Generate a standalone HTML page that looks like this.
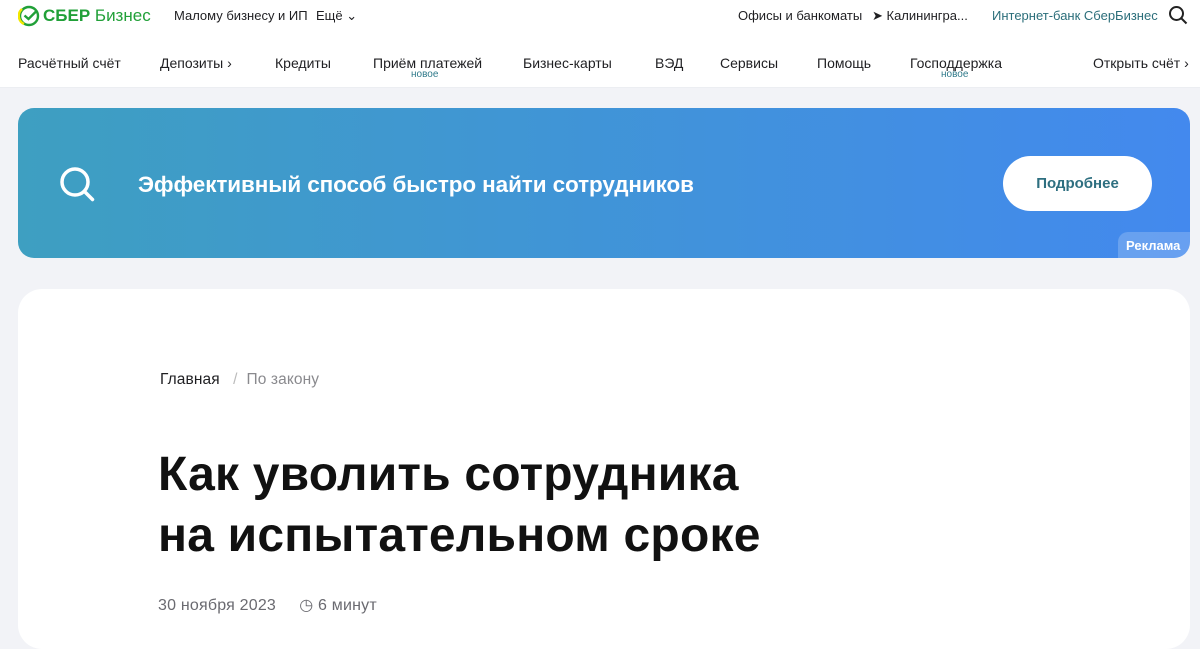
<!DOCTYPE html>
<html><head><meta charset="utf-8"><style>
*{margin:0;padding:0;box-sizing:border-box}
body{width:1200px;height:628px;overflow:hidden;background:#f2f3f7;font-family:"Liberation Sans",sans-serif;color:#1f1f22;position:relative}
.top{position:absolute;left:0;top:0;width:1200px;height:88px;background:#fff;border-bottom:1px solid #eceef2}
.t{position:absolute;white-space:nowrap}
.sm{font-size:13px;top:8px}
.nav{font-size:14px;top:55px}
.new{position:absolute;font-size:10px;color:#2f7a8a;top:69px}
.ban{position:absolute;left:18px;top:108px;width:1172px;height:150px;border-radius:16px;background:linear-gradient(90deg,#3e9fc1,#4389ee);overflow:hidden}
.card{position:absolute;left:18px;top:289px;width:1172px;height:360px;border-radius:24px;background:#fff}
</style></head><body>
<div class="top">
<svg style="position:absolute;left:18px;top:5px" width="22" height="22" viewBox="0 0 22 22"><circle cx="11" cy="11" r="9" fill="none" stroke="#21a038" stroke-width="2.4"/><path d="M4 4 A9 9 0 0 0 6 19" stroke="#f2e800" stroke-width="2.4" fill="none"/><path d="M6.5 10.5l4 3.5 8-8" stroke="#21a038" stroke-width="2.4" fill="none"/></svg>
<div class="t" style="left:43px;top:6px;font-size:17px;font-weight:bold;color:#21a038">СБЕР <span style="font-weight:normal">Бизнес</span></div>
<div class="t sm" style="left:174px">Малому бизнесу и ИП</div>
<div class="t sm" style="left:316px">Ещё &#8964;</div>
<div class="t sm" style="left:738px">Офисы и банкоматы</div>
<div class="t sm" style="left:872px">➤ Калинингра...</div>
<div class="t sm" style="left:992px;color:#2b6e7a">Интернет-банк СберБизнес</div>
<svg style="position:absolute;left:1168px;top:5px" width="20" height="20" viewBox="0 0 20 20"><circle cx="8.5" cy="8.5" r="6.5" fill="none" stroke="#222" stroke-width="2"/><path d="M13.5 13.5l5 5" stroke="#222" stroke-width="2"/></svg>
<div class="t nav" style="left:18px">Расчётный счёт</div>
<div class="t nav" style="left:160px">Депозиты ›</div>
<div class="t nav" style="left:275px">Кредиты</div>
<div class="t nav" style="left:373px">Приём платежей</div><div class="new" style="left:411px">новое</div>
<div class="t nav" style="left:523px">Бизнес-карты</div>
<div class="t nav" style="left:655px">ВЭД</div>
<div class="t nav" style="left:720px">Сервисы</div>
<div class="t nav" style="left:817px">Помощь</div>
<div class="t nav" style="left:910px">Господдержка</div><div class="new" style="left:941px">новое</div>
<div class="t nav" style="left:1093px">Открыть счёт ›</div>
</div>
<div class="ban">
<svg style="position:absolute;left:40px;top:57px" width="38" height="38" viewBox="0 0 38 38"><circle cx="17" cy="17" r="13" fill="none" stroke="#fff" stroke-width="3.5"/><path d="M26.5 26.5l8 8" stroke="#fff" stroke-width="3.5" stroke-linecap="round"/></svg>
<div class="t" style="left:120px;top:64px;font-size:22.5px;letter-spacing:-0.1px;font-weight:bold;color:#fff">Эффективный способ быстро найти сотрудников</div>
<div style="position:absolute;left:985px;top:48px;width:149px;height:55px;border-radius:28px;background:#fff;color:#2e6f80;font-weight:bold;font-size:15px;text-align:center;line-height:55px">Подробнее</div>
<div style="position:absolute;left:1100px;top:124px;width:80px;height:30px;border-radius:10px 0 0 0;background:rgba(255,255,255,.2);color:#fff;font-weight:bold;font-size:13px;padding:6px 0 0 8px">Реклама</div>
</div>
<div class="card">
<div class="t" style="left:142px;top:82px;font-size:15.5px;letter-spacing:0.1px">Главная <span style="color:#bbb;margin:0 9px">/</span><span style="color:#8a8a8e">По закону</span></div>
<div class="t" style="left:140px;top:155px;font-size:48px;letter-spacing:0.2px;font-weight:bold;line-height:61px;color:#111">Как уволить сотрудника<br>на испытательном сроке</div>
<div class="t" style="left:140px;top:306px;font-size:16px;letter-spacing:0.2px;color:#6a6a70">30 ноября 2023 &nbsp;&nbsp;&nbsp; ◷ 6 минут</div>
</div>
</body></html>
